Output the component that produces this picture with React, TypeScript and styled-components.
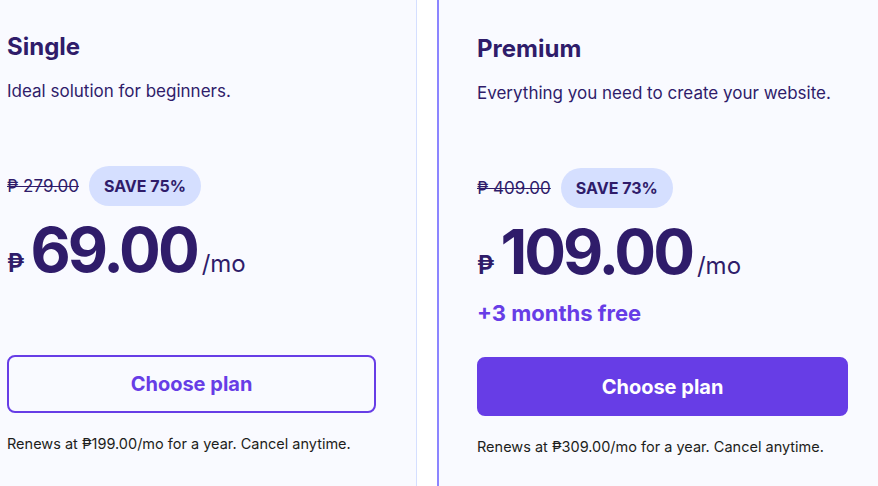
import React from "react";
import styled, { createGlobalStyle } from "styled-components";

const GlobalStyle = createGlobalStyle`
  html, body {
    margin: 0;
    padding: 0;
    background: #ffffff;
  }
  body {
    font-family: Inter, "DejaVu Sans", sans-serif;
    color: #2f1c6a;
  }
`;

const StyledPage = styled.div`
  display: flex;
  gap: 20px;
  width: 878px;
  height: 486px;
  overflow: hidden;
`;

const StyledCard = styled.div<{ $featured?: boolean }>`
  display: flex;
  flex-direction: column;
  box-sizing: border-box;
  height: 100%;
  background: #f9faff;
  ${(p) =>
    p.$featured
      ? `
    flex: 1;
    border-left: 2px solid #8c85ff;
    padding: 35px 30px 0 38px;
  `
      : `
    width: 417px;
    flex-shrink: 0;
    border-right: 1px solid #d5dfff;
    padding: 33px 40px 0 7px;
  `}
`;

const StyledTitle = styled.h2`
  margin: 0;
  font-size: 24px;
  font-weight: 700;
  line-height: 28px;
  color: #2f1c6a;
`;

const StyledDescription = styled.p`
  margin: 18px 0 0;
  font-size: 17px;
  line-height: 24px;
  color: #2f1c6a;
`;

const StyledOldPriceRow = styled.div`
  display: flex;
  align-items: center;
  gap: 10px;
  margin-top: 63px;
`;

const StyledOldPrice = styled.span`
  font-size: 17px;
  color: #2f1c6a;
  text-decoration: line-through;
`;

const StyledBadge = styled.span`
  display: inline-flex;
  align-items: center;
  height: 40px;
  padding: 0 15px;
  border-radius: 20px;
  background: #d5dfff;
  font-size: 16px;
  font-weight: 700;
  color: #2f1c6a;
`;

const StyledPriceRow = styled.div`
  display: flex;
  align-items: baseline;
  margin-top: 8px;
  color: #2f1c6a;
`;

const StyledCurrency = styled.span`
  font-size: 25px;
  font-weight: 600;
  margin-right: 6px;
`;

const StyledAmount = styled.span`
  font-size: 62px;
  font-weight: 700;
  line-height: 72px;
  letter-spacing: -3px;
`;

const StyledPeriod = styled.span`
  font-size: 24px;
  margin-left: 5px;
`;

const StyledBonus = styled.div`
  height: 30px;
  margin-top: 10px;
  font-size: 22px;
  font-weight: 700;
  line-height: 30px;
  color: #673de6;
`;

const StyledButton = styled.button<{ $primary?: boolean }>`
  display: flex;
  align-items: center;
  justify-content: center;
  box-sizing: border-box;
  width: 100%;
  height: ${(p) => (p.$primary ? "59px" : "58px")};
  margin-top: 29px;
  border-radius: 8px;
  border: 2px solid #673de6;
  background: ${(p) => (p.$primary ? "#673de6" : "transparent")};
  color: ${(p) => (p.$primary ? "#ffffff" : "#673de6")};
  font-family: inherit;
  font-size: 20px;
  font-weight: 700;
  cursor: pointer;
`;

const StyledRenews = styled.p`
  margin: 21px 0 0;
  font-size: 14.5px;
  line-height: 20px;
  color: #1d1e20;
`;

type Plan = {
  name: string;
  description: string;
  oldPrice: string;
  save: string;
  price: string;
  bonus?: string;
  renews: string;
  featured?: boolean;
};

const plans: Plan[] = [
  {
    name: "Single",
    description: "Ideal solution for beginners.",
    oldPrice: "₱ 279.00",
    save: "SAVE 75%",
    price: "69.00",
    renews: "Renews at ₱199.00/mo for a year. Cancel anytime.",
  },
  {
    name: "Premium",
    description: "Everything you need to create your website.",
    oldPrice: "₱ 409.00",
    save: "SAVE 73%",
    price: "109.00",
    bonus: "+3 months free",
    renews: "Renews at ₱309.00/mo for a year. Cancel anytime.",
    featured: true,
  },
];

const PlanCard = ({ plan }: { plan: Plan }) => (
  <StyledCard $featured={plan.featured}>
    <StyledTitle>{plan.name}</StyledTitle>
    <StyledDescription>{plan.description}</StyledDescription>
    <StyledOldPriceRow>
      <StyledOldPrice>{plan.oldPrice}</StyledOldPrice>
      <StyledBadge>{plan.save}</StyledBadge>
    </StyledOldPriceRow>
    <StyledPriceRow>
      <StyledCurrency>₱</StyledCurrency>
      <StyledAmount>{plan.price}</StyledAmount>
      <StyledPeriod>/mo</StyledPeriod>
    </StyledPriceRow>
    <StyledBonus>{plan.bonus}</StyledBonus>
    <StyledButton $primary={plan.featured}>Choose plan</StyledButton>
    <StyledRenews>{plan.renews}</StyledRenews>
  </StyledCard>
);

export default function App() {
  return (
    <>
      <GlobalStyle />
      <StyledPage>
        {plans.map((plan) => (
          <PlanCard key={plan.name} plan={plan} />
        ))}
      </StyledPage>
    </>
  );
}
